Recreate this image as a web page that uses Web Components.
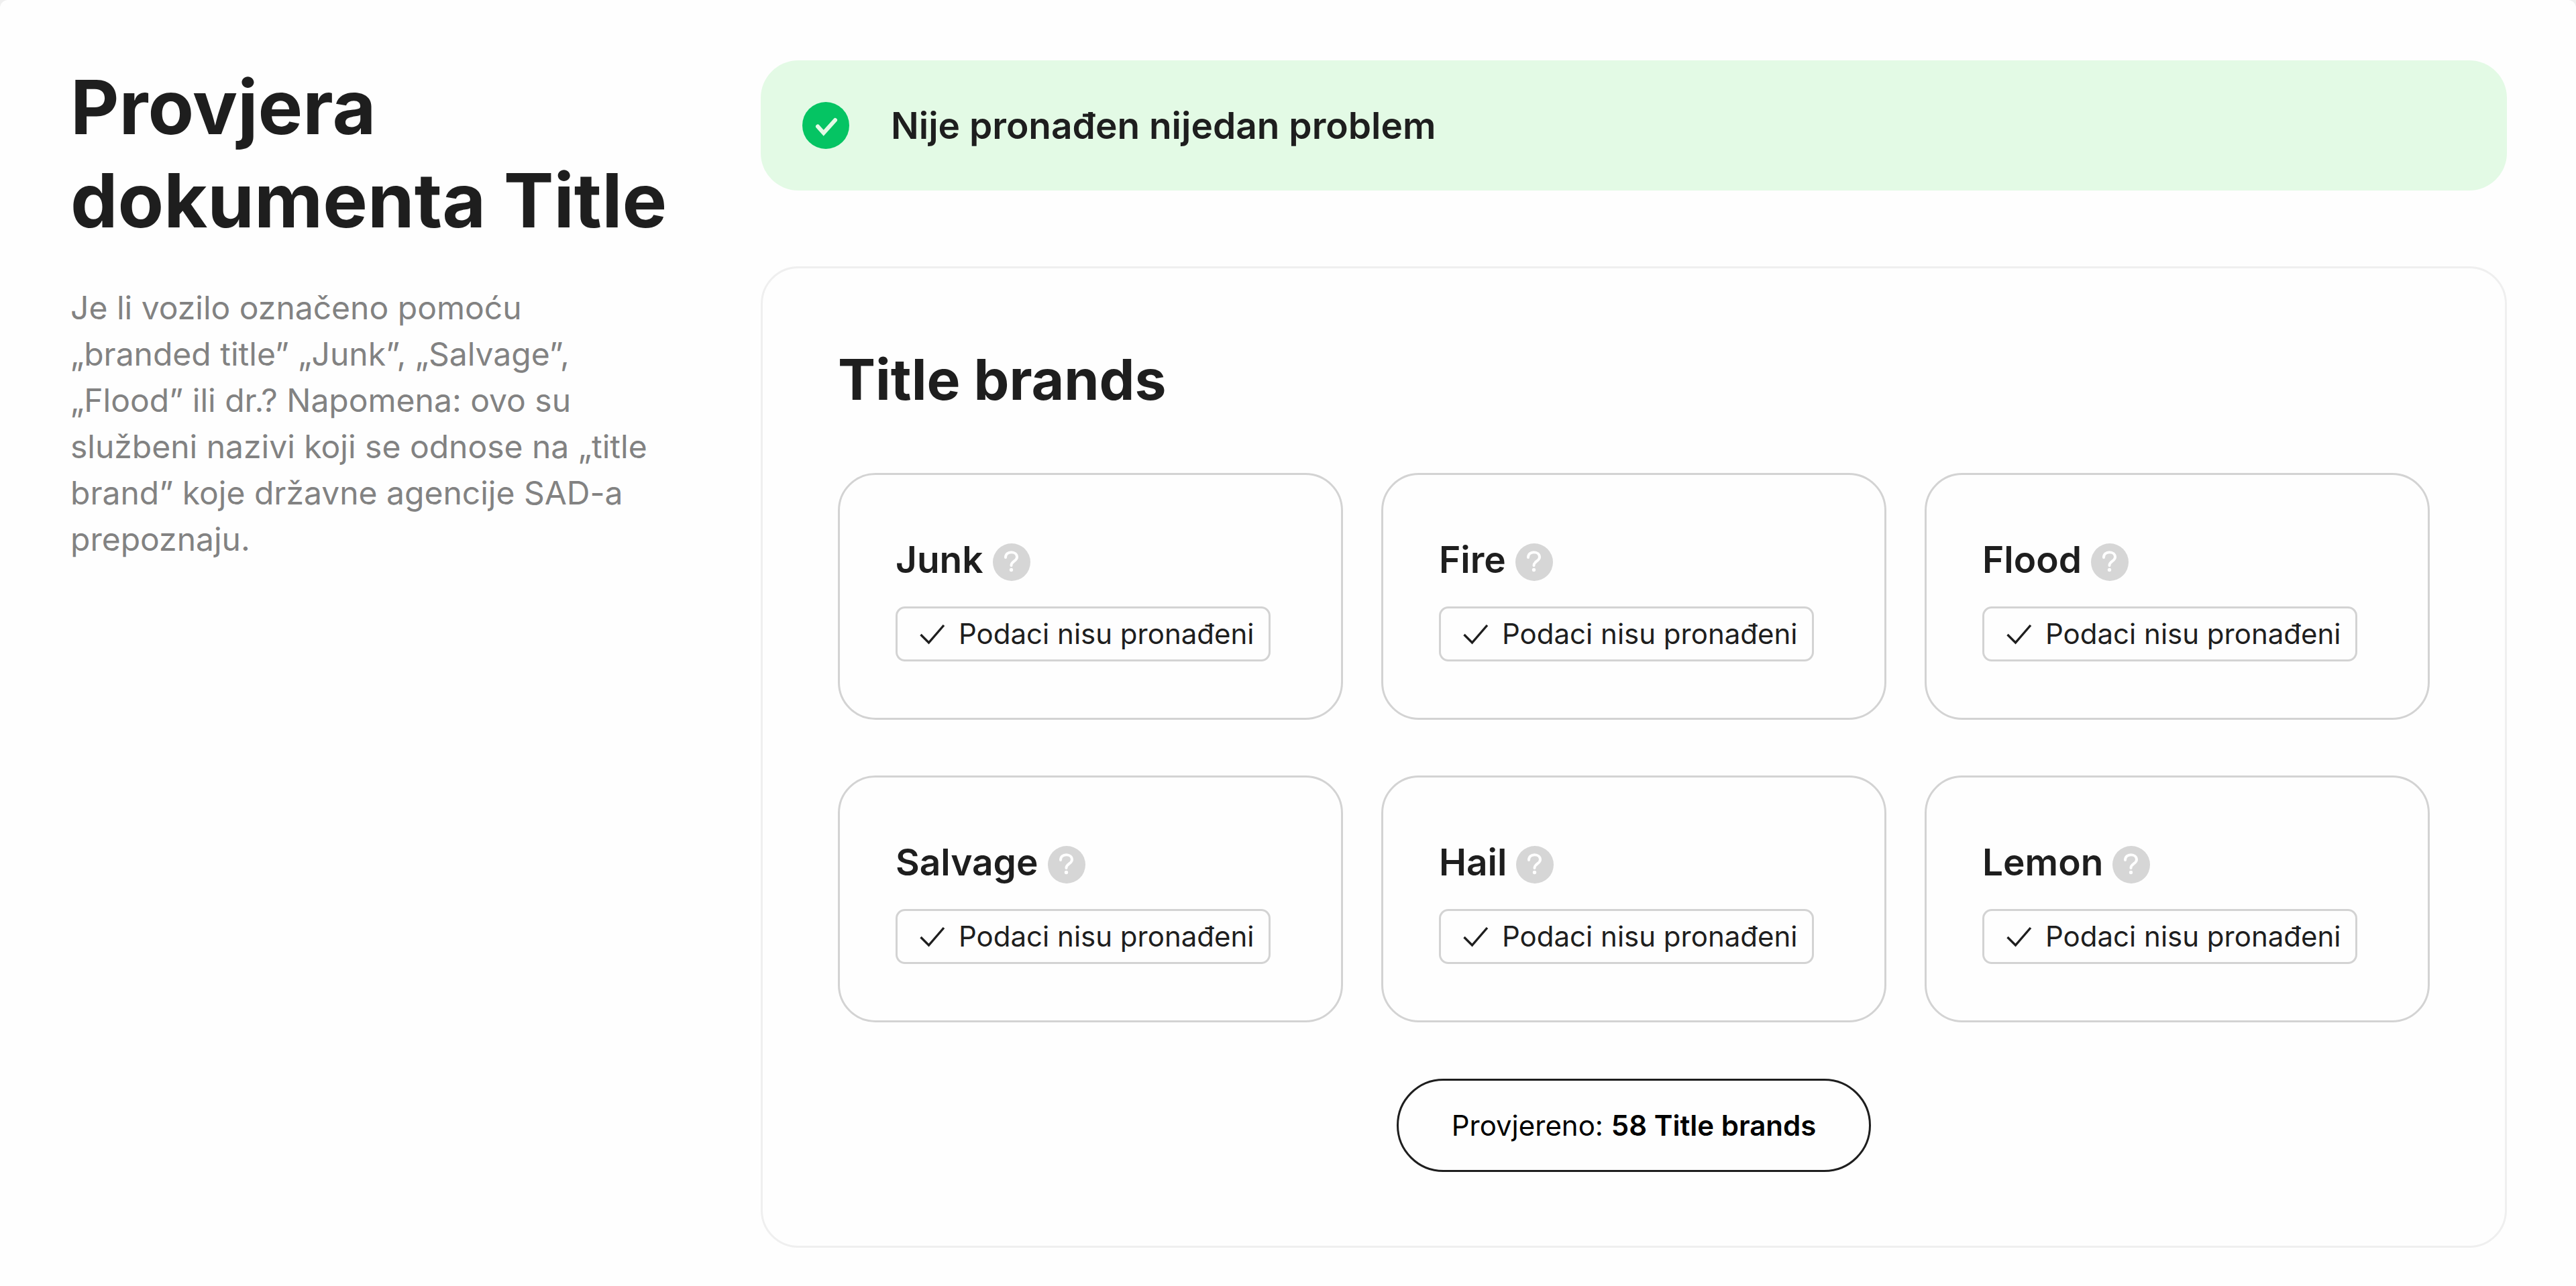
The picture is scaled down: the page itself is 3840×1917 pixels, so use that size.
<!DOCTYPE html>
<html lang="hr">
<head>
<meta charset="utf-8">
<meta name="viewport" content="width=device-width, initial-scale=1">
<title>Provjera dokumenta Title</title>
<style>
  html { background: #efefef; }
  body {
    margin: 0;
    font-family: Inter, "Liberation Sans", sans-serif;
    color: #1e1e1e;
  }
</style>
</head>
<body>
<report-section>
  <span slot="heading">Provjera dokumenta Title</span>
  <span slot="description">Je li vozilo označeno pomoću „branded title” „Junk”, „Salvage”, „Flood” ili dr.? Napomena: ovo su službeni nazivi koji se odnose na „title brand” koje državne agencije SAD-a prepoznaju.</span>
  <status-banner>Nije pronađen nijedan problem</status-banner>
  <brand-panel>
    <span slot="heading">Title brands</span>
    <brand-card name="Junk">Podaci nisu pronađeni</brand-card>
    <brand-card name="Fire">Podaci nisu pronađeni</brand-card>
    <brand-card name="Flood">Podaci nisu pronađeni</brand-card>
    <brand-card name="Salvage">Podaci nisu pronađeni</brand-card>
    <brand-card name="Hail">Podaci nisu pronađeni</brand-card>
    <brand-card name="Lemon">Podaci nisu pronađeni</brand-card>
    <summary-pill slot="footer">Provjereno: <b>58 Title brands</b></summary-pill>
  </brand-panel>
</report-section>

<script>
  class BaseElement extends HTMLElement {
    constructor() {
      super();
      this.attachShadow({ mode: "open" }).innerHTML = this.constructor.markup;
    }
  }

  class ReportSection extends BaseElement {
    static markup = `
      <style>
        :host { display: block; }
        section {
          box-sizing: border-box;
          min-height: 100vh;
          display: grid;
          grid-template-columns: minmax(0, 896px) minmax(0, 1fr);
          column-gap: 133px;
          align-items: start;
          padding: 90px 103px 57px 105px;
          background: #fefefe;
          border-radius: 12px 12px 0 0;
        }
        header { display: flex; flex-direction: column; gap: 56px; }
        h2 { margin: 0; font-size: 112px; line-height: 139px; font-weight: 700; }
        p { margin: 0; padding-right: 24px; font-size: 48px; line-height: 69px; color: #828282; }
        .content { display: flex; flex-direction: column; gap: 113px; }
        @media (max-width: 2600px) {
          section { grid-template-columns: minmax(0, 1fr); row-gap: 84px; }
        }
      </style>
      <section>
        <header>
          <h2><slot name="heading"></slot></h2>
          <p><slot name="description"></slot></p>
        </header>
        <div class="content"><slot></slot></div>
      </section>`;
  }

  class StatusBanner extends BaseElement {
    static markup = `
      <style>
        :host {
          display: flex;
          align-items: center;
          gap: 62px;
          padding: 55px 62px;
          border-radius: 56px;
          background: #e3fae5;
          font-size: 55px;
          line-height: 84px;
          font-weight: 600;
        }
        svg { flex: none; width: 70px; height: 70px; }
      </style>
      <svg viewBox="0 0 70 70" aria-hidden="true">
        <circle cx="35" cy="35" r="35" fill="#05c463"/>
        <path d="M23 36.5 31.7 46.3 49 27" fill="none" stroke="#e3fae5" stroke-width="6" stroke-linecap="round"/>
      </svg>
      <span><slot></slot></span>`;
  }

  class BrandPanel extends BaseElement {
    static markup = `
      <style>
        :host {
          display: flex;
          flex-direction: column;
          gap: 84px;
          padding: 110px 112px;
          border: 3px solid #efefef;
          border-radius: 56px;
        }
        h3 { margin: 0; font-size: 84px; line-height: 111px; font-weight: 700; }
        .grid {
          display: grid;
          grid-template-columns: repeat(auto-fit, minmax(min(700px, 100%), 1fr));
          gap: 83px 57px;
        }
        footer { display: flex; justify-content: center; }
      </style>
      <h3><slot name="heading"></slot></h3>
      <div class="grid"><slot></slot></div>
      <footer><slot name="footer"></slot></footer>`;
  }

  class BrandCard extends BaseElement {
    static markup = `
      <style>
        :host {
          display: flex;
          flex-direction: column;
          align-items: flex-start;
          gap: 28px;
          padding: 84px 83px;
          border: 3px solid #d3d3d3;
          border-radius: 56px;
        }
        .title { display: flex; align-items: center; gap: 14px; }
        h4 { margin: 0; font-size: 55px; line-height: 84px; font-weight: 600; }
        button {
          width: 56px;
          height: 56px;
          margin-top: 8px;
          padding: 0;
          border: 0;
          border-radius: 50%;
          background: #d6d6d6;
          cursor: pointer;
        }
        button svg { display: block; width: 56px; height: 56px; }
        .badge {
          display: flex;
          align-items: center;
          gap: 14px;
          padding: 8px 22px;
          border: 3px solid #d3d3d3;
          border-radius: 14px;
          font-size: 42px;
          line-height: 60px;
        }
        .badge svg { flex: none; width: 55px; height: 55px; }
      </style>
      <div class="title">
        <h4></h4>
        <button type="button">
          <svg viewBox="0 0 56 56" aria-hidden="true">
            <path d="M19 21C19 16 22.5 13.2 27.5 13.2S36 16.2 36 20.5C36 26.5 27.5 26.5 27.5 33" fill="none" stroke="#fefefe" stroke-width="4" stroke-linecap="round"/>
            <circle cx="27.5" cy="39.5" r="2.7" fill="#fefefe"/>
          </svg>
        </button>
      </div>
      <div class="badge">
        <svg viewBox="0 0 55 55" aria-hidden="true">
          <path d="M12.5 28 24.5 40 47 14" fill="none" stroke="#1e1e1e" stroke-width="3.4"/>
        </svg>
        <span><slot></slot></span>
      </div>`;
    connectedCallback() {
      const name = this.getAttribute("name");
      this.shadowRoot.querySelector("h4").textContent = name;
      this.shadowRoot.querySelector("button").setAttribute("aria-label", name);
    }
  }

  class SummaryPill extends BaseElement {
    static markup = `
      <style>
        :host {
          display: block;
          padding: 36px 79px;
          border: 3px solid #1e1e1e;
          border-radius: 70px;
          font-size: 42px;
          line-height: 61px;
          color: #000;
        }
        ::slotted(b) { font-weight: 600; }
      </style>
      <slot></slot>`;
  }

  customElements.define("report-section", ReportSection);
  customElements.define("status-banner", StatusBanner);
  customElements.define("brand-panel", BrandPanel);
  customElements.define("brand-card", BrandCard);
  customElements.define("summary-pill", SummaryPill);
</script>
</body>
</html>
